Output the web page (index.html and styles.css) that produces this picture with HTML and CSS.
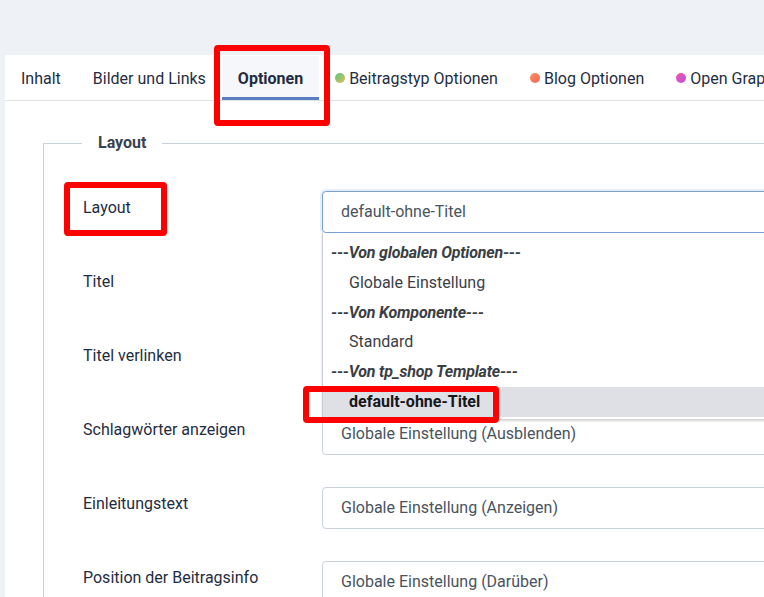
FILE: index.html
```
<!DOCTYPE html>
<html lang="de">
<head>
    <meta charset="UTF-8">
    <meta name="viewport" content="width=device-width, initial-scale=1.0">
    <title>Beitrag bearbeiten</title>
    <link rel="stylesheet" href="styles.css">
</head>
<body>

    <div class="panel">
        <ul class="tabs">
            <li class="tab">Inhalt</li>
            <li class="tab">Bilder und Links</li>
            <li class="tab active">Optionen
                <span class="mark mark-tab"></span>
            </li>
            <li class="tab"><span class="dot dot-green"></span>Beitragstyp Optionen</li>
            <li class="tab"><span class="dot dot-orange"></span>Blog Optionen</li>
            <li class="tab"><span class="dot dot-pink"></span>Open Graph</li>
        </ul>

        <div class="tab-body">
            <fieldset class="options">
                <legend>Layout</legend>

                <div class="row">
                    <label class="row-label">Layout
                        <span class="mark mark-label"></span>
                    </label>
                    <div class="field">
                        <div class="select focus">default-ohne-Titel</div>
                        <ul class="dropdown">
                            <li class="group">---Von globalen Optionen---</li>
                            <li class="option">Globale Einstellung</li>
                            <li class="group">---Von Komponente---</li>
                            <li class="option">Standard</li>
                            <li class="group">---Von tp_shop Template---</li>
                            <li class="option selected">default-ohne-Titel
                                <span class="mark mark-option"></span>
                            </li>
                        </ul>
                    </div>
                </div>

                <!-- these two selects sit under the open list -->
                <div class="row">
                    <label class="row-label">Titel</label>
                    <div class="field"><div class="select"></div></div>
                </div>

                <div class="row">
                    <label class="row-label">Titel verlinken</label>
                    <div class="field"><div class="select"></div></div>
                </div>

                <div class="row">
                    <label class="row-label">Schlagwörter anzeigen</label>
                    <div class="field"><div class="select">Globale Einstellung (Ausblenden)</div></div>
                </div>

                <div class="row">
                    <label class="row-label">Einleitungstext</label>
                    <div class="field"><div class="select">Globale Einstellung (Anzeigen)</div></div>
                </div>

                <div class="row">
                    <label class="row-label">Position der Beitragsinfo</label>
                    <div class="field"><div class="select">Globale Einstellung (Darüber)</div></div>
                </div>
            </fieldset>
        </div>
    </div>

</body>
</html>
```

FILE: styles.css
```
html, body {
  margin: 0;
  overflow: hidden;
}

body {
  background-color: #eef2f7;
  font-family: Roboto, "Liberation Sans", sans-serif;
  font-size: 16px;
  color: #1f2d42;
  width: 764px;
  height: 597px;
}

.panel {
  margin-top: 55px;
  margin-left: 5px;
  width: 900px;
  height: 600px;
  background-color: white;
}

/* tab bar */
.tabs {
  display: flex;
  margin: 0;
  padding: 1px 0 0;
  list-style: none;
  height: 44px;
  border-bottom: 1px solid #dfe3e8;
}

.tab {
  position: relative;
  display: flex;
  align-items: center;
  padding: 0 16px;
  white-space: nowrap;
  color: #1f2d42;
}

.tab.active {
  font-weight: bold;
  background-color: #f5f7fa;
  box-shadow: inset 0 -3px 0 #5a7ec1;
}

.dot {
  width: 10px;
  height: 10px;
  border-radius: 50%;
  margin-right: 4px;
}

.dot-green {
  background: linear-gradient(135deg, #52c77e, #e3bc5c);
}

.dot-orange {
  background: linear-gradient(135deg, #f89165, #f4664f);
}

.dot-pink {
  background: linear-gradient(135deg, #ee5aa5, #c04ee6);
}

/* options */
.tab-body {
  padding: 30px 0 0 38px;
}

.options {
  margin: 0;
  padding: 0 0 0 38px;
  border: 1px solid #cbd1d9;
  border-right: none;
  border-bottom: none;
  min-width: 0;
}

.options legend {
  padding: 0 16px;
  font-weight: bold;
  line-height: 24px;
  color: #3a4350;
}

.row {
  display: grid;
  grid-template-columns: 239px 520px;
  height: 42px;
  margin-top: 32px;
  margin-left: 1px;
}

.row:first-of-type {
  margin-top: 36px;
}

.row-label {
  position: relative;
  align-self: start;
  padding-top: 6px;
  line-height: 22px;
  color: #1f2d42;
}

.field {
  position: relative;
}

.select {
  box-sizing: border-box;
  height: 42px;
  padding: 0 18px;
  line-height: 40px;
  border: 1px solid #cbd1d9;
  border-radius: 4px;
  color: #4a5360;
  background-color: white;
}

.select.focus {
  border-color: #7a9fd4;
  box-shadow: 0 0 0 2px #e6eef9;
}

/* open option list */
.dropdown {
  position: absolute;
  z-index: 2;
  top: 42px;
  left: 0;
  right: 0;
  margin: 0;
  padding: 5px 0 2px;
  list-style: none;
  background-color: white;
  border-left: 1px solid #c9ced6;
  box-shadow: 0 2px 2px rgba(0, 0, 0, 0.18);
}

.dropdown li {
  position: relative;
  height: 29.8px;
  line-height: 29.8px;
  white-space: nowrap;
}

.group {
  padding-left: 8px;
  font-weight: bold;
  font-style: italic;
  letter-spacing: -0.2px;
  color: #3b3f45;
}

.option {
  padding-left: 26px;
  color: #3b4048;
}

.option.selected {
  background-color: #dfdfe6;
  font-weight: bold;
  color: #16181c;
}

/* red markers from the screenshot */
.mark {
  position: absolute;
  box-sizing: border-box;
  border: 6px solid #ff0000;
  border-radius: 4px;
  pointer-events: none;
}

.mark-tab {
  left: -8px;
  top: -11px;
  width: 116px;
  height: 81px;
}

.mark-label {
  left: -19px;
  top: -9px;
  width: 103px;
  height: 54px;
}

.mark-option {
  left: -20px;
  top: -1px;
  width: 196px;
  height: 37px;
}
```
